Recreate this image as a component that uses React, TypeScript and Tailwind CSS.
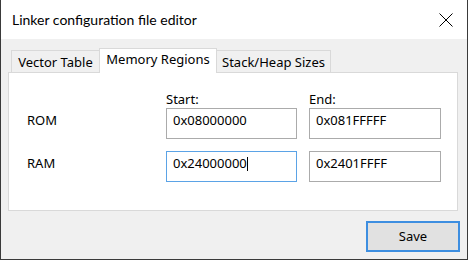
import React from "react";

const font = { fontFamily: '"Noto Sans", "Open Sans", sans-serif' };

function Field({ value, focused, caret }: { value: string; focused?: boolean; caret?: boolean }) {
  return (
    <div
      className={
        "flex h-[31px] items-start border bg-white pl-[6px] pt-[3px] text-[13px] leading-[17px] text-black " +
        (focused ? "border-[#5ba3e6]" : "border-[#ababab]")
      }
    >
      <span>{value}</span>
      {caret && <span className="mt-[2px] h-[14px] w-px bg-black" />}
    </div>
  );
}

export default function App() {
  return (
    <div
      className="flex h-[260px] w-[468px] flex-col border-x border-b border-[#3a3a3a] bg-white"
      style={font}
    >
      {/* Title bar */}
      <div className="flex h-[39px] shrink-0 items-center justify-between pl-[11px] pr-[14px]">
        <span className="font-['Lato',sans-serif] text-[14px] text-black">
          Linker configuration file editor
        </span>
        <svg width="14" height="14" viewBox="0 0 14 14" className="text-black">
          <path d="M0.5 0.5 L13.5 13.5 M13.5 0.5 L0.5 13.5" stroke="currentColor" strokeWidth="1" />
        </svg>
      </div>

      {/* Body */}
      <div className="flex flex-1 flex-col bg-[#f0f0f0] pt-[9px]">
        {/* Tabs */}
        <div className="ml-[10px] flex items-end text-[13px] leading-[17px] text-black">
          <div className="flex h-[22px] w-[88px] justify-center border-l border-t border-[#d9d9d9] bg-[#f0f0f0] pt-[3px]">
            Vector Table
          </div>
          <div className="relative z-10 -mb-px flex h-[25px] w-[118px] justify-center border-x border-t border-[#d9d9d9] bg-white pt-[2px]">
            Memory Regions
          </div>
          <div className="flex h-[22px] w-[114px] justify-center border-r border-t border-[#d9d9d9] bg-[#f0f0f0] pt-[3px]">
            Stack/Heap Sizes
          </div>
        </div>

        {/* Panel */}
        <div className="ml-[7px] h-[139px] w-[450px] border border-[#d9d9d9] bg-white pl-[18px] pt-[18px] text-[13px] leading-[17px] text-black">
          <div className="grid grid-cols-[127px_131px_132px] gap-x-[12px]">
            <div />
            <div className="h-[17px]">Start:</div>
            <div className="h-[17px]">End:</div>

            <div className="pt-[4px]">ROM</div>
            <Field value="0x08000000" />
            <Field value="0x081FFFFF" />

            <div className="mt-[12px] pt-[4px]">RAM</div>
            <div className="mt-[12px]">
              <Field value="0x24000000" focused caret />
            </div>
            <div className="mt-[12px]">
              <Field value="0x2401FFFF" />
            </div>
          </div>
        </div>

        {/* Footer */}
        <div className="mr-[7px] mt-[10px] flex justify-end">
          <button className="h-[31px] w-[94px] border-2 border-[#3d8ee0] bg-[#e1e1e1] text-[13px] text-black">
            Save
          </button>
        </div>
      </div>
    </div>
  );
}
